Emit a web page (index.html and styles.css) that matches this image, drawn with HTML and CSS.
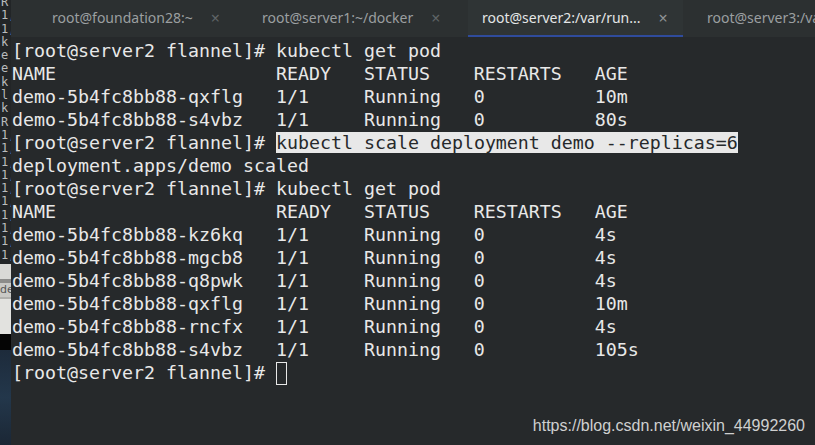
FILE: index.html
```html
<!DOCTYPE html>
<html>
<head>
<meta charset="utf-8">
<link rel="stylesheet" href="styles.css">
</head>
<body>
<div class="screen">
  <div class="behind">
    <pre class="behind-text">R
1,
1,
k
e
e
k
l
k
R
1,
1,
1,
1,
1,
1,
1,
1,
1,
1,</pre>
    <div class="behind-panel">
      <div class="panel-line"></div>
      <div class="panel-text">de</div>
      <div class="panel-foot"></div>
    </div>
    <div class="behind-black"></div>
    <div class="desktop"></div>
  </div>
  <div class="window">
    <div class="tabbar">
      <div class="tab tab-1"><span class="label">root@foundation28:~</span><span class="close">×</span></div>
      <div class="tab tab-2"><span class="label">root@server1:~/docker</span><span class="close">×</span></div>
      <div class="tab tab-3 active"><span class="label">root@server2:/var/run...</span><span class="close">×</span></div>
      <div class="tab tab-4"><span class="label">root@server3:/var/www</span><span class="close">×</span></div>
    </div>
    <pre class="term">[root@server2 flannel]# kubectl get pod
NAME                    READY   STATUS    RESTARTS   AGE
demo-5b4fc8bb88-qxflg   1/1     Running   0          10m
demo-5b4fc8bb88-s4vbz   1/1     Running   0          80s
[root@server2 flannel]# <span class="sel">kubectl scale deployment demo --replicas=6</span>
deployment.apps/demo scaled
[root@server2 flannel]# kubectl get pod
NAME                    READY   STATUS    RESTARTS   AGE
demo-5b4fc8bb88-kz6kq   1/1     Running   0          4s
demo-5b4fc8bb88-mgcb8   1/1     Running   0          4s
demo-5b4fc8bb88-q8pwk   1/1     Running   0          4s
demo-5b4fc8bb88-qxflg   1/1     Running   0          10m
demo-5b4fc8bb88-rncfx   1/1     Running   0          4s
demo-5b4fc8bb88-s4vbz   1/1     Running   0          105s
[root@server2 flannel]# <span class="cursor"> </span></pre>
  </div>
  <div class="watermark">https://blog.csdn.net/weixin_44992260</div>
</div>
</body>
</html>
```

FILE: styles.css
```css
html, body {
  margin: 0;
  padding: 0;
  background: #26292b;
}
.screen {
  position: relative;
  width: 815px;
  height: 445px;
  display: flex;
  overflow: hidden;
}
.behind {
  width: 11px;
  flex: none;
  display: flex;
  flex-direction: column;
  background: #222527;
  overflow: hidden;
}
.behind-text {
  margin: 0;
  padding: 0 0 0 1px;
  height: 268px;
  overflow: hidden;
  font-family: "DejaVu Sans Mono", monospace;
  font-size: 12px;
  line-height: 13.3px;
  color: #b9bcbd;
  margin-top: -4px;
  flex: none;
}
.behind-panel {
  height: 70px;
  flex: none;
  background: #d9d9d6;
  display: flex;
  flex-direction: column;
}
.panel-line {
  height: 4px;
  margin-top: 15px;
  background: #8c8c8a;
}
.panel-text {
  font-family: "DejaVu Sans", sans-serif;
  font-size: 11px;
  line-height: 14px;
  color: #555;
  padding-left: 0;
  background: #c9c9c6;
}
.panel-foot {
  flex: 1;
  background: #e2e2df;
  border-top: 2px solid #b0b0ad;
}
.behind-black {
  height: 16px;
  flex: none;
  background: #050505;
}
.desktop {
  flex: 1;
  background: linear-gradient(180deg, #1d2b3b 0%, #23374b 50%, #1b2735 100%);
}
.window {
  flex: 1;
  display: flex;
  flex-direction: column;
  background: #26292b;
  min-width: 0;
}
.tabbar {
  height: 37px;
  flex: none;
  display: flex;
  background: #2c3031;
  overflow: hidden;
}
.tab {
  flex: none;
  display: flex;
  align-items: center;
  height: 35px;
  border-bottom: 2px solid transparent;
  font-family: "Noto Sans", sans-serif;
  font-size: 14px;
  color: #9b9fa0;
  white-space: nowrap;
  box-sizing: content-box;
}
.tab .close {
  margin-left: 18px;
  font-size: 16px;
  color: #5f6466;
}
.tab-1 { width: 188px; padding-left: 41px; }
.tab-2 { width: 206px; padding-left: 22px; }
.tab-3 { width: 201px; padding-left: 14px; }
.tab-4 { width: 300px; padding-left: 24px; }
.tab.active {
  background: #2f3435;
  border-bottom-color: #2f4b9c;
  color: #e4e6e6;
}
.tab.active .close {
  color: #8e9294;
}
.term {
  margin: 0;
  padding: 2px 0 0 1px;
  font-family: "DejaVu Sans Mono", monospace;
  font-size: 18.27px;
  line-height: 23px;
  color: #e8e8e8;
  white-space: pre;
}
.sel {
  background: #e8e8e8;
  color: #26292b;
}
.cursor {
  display: inline-block;
  width: 9px;
  height: 21px;
  border: 1px solid #e8e8e8;
  vertical-align: top;
  margin-top: 1px;
}
.watermark {
  position: absolute;
  right: 10px;
  bottom: 10px;
  font-family: "Liberation Sans", Arial, sans-serif;
  font-size: 16px;
  color: #cfd0d0;
}
```
